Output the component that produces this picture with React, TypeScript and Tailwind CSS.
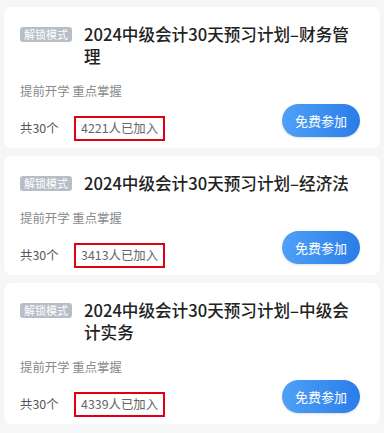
const plans = [
  { title: '2024中级会计30天预习计划–财务管理', joined: 4221 },
  { title: '2024中级会计30天预习计划–经济法', joined: 3413 },
  { title: '2024中级会计30天预习计划–中级会计实务', joined: 4339 },
]

const font = { fontFamily: '"Noto Sans CJK SC", "Liberation Sans", sans-serif' }

function PlanCard({ title, joined }: { title: string; joined: number }) {
  return (
    <div className="bg-white rounded-lg pt-4 pb-[7px] pl-4 pr-5">
      {/* 标题 */}
      <div className="flex items-start">
        <span className="mt-[4px] shrink-0 bg-[#b7bec8] text-white text-[11px] leading-[15px] px-1 rounded-[3px]">
          解锁模式
        </span>
        <h3 className="ml-3 text-[16.6px] leading-[22px] font-medium text-[#222]">{title}</h3>
      </div>

      <div className="flex items-end justify-between">
        <div>
          <p className="mt-[16px] text-[12.4px] leading-4 text-[#8a8a8a]">提前开学 重点掌握</p>
          <div className="mt-[17px] flex items-center text-[12.4px] text-[#555]">
            <span className="w-[54px]">共30个</span>
            <span className="h-[25px] px-[5px] flex items-center border-2 border-[#e0000f] text-[#666]">
              {joined}人已加入
            </span>
          </div>
        </div>
        <button className="mb-1 h-[33px] w-[78px] rounded-full bg-gradient-to-r from-[#4fa0f7] to-[#2a7de8] text-white text-[13px] shadow-sm">
          免费参加
        </button>
      </div>
    </div>
  )
}

export default function App() {
  return (
    <div className="min-h-[433px] bg-[#f6f6f6] px-1 pt-[7px] flex flex-col gap-2" style={font}>
      {plans.map(p => (
        <PlanCard key={p.joined} title={p.title} joined={p.joined} />
      ))}
    </div>
  )
}
